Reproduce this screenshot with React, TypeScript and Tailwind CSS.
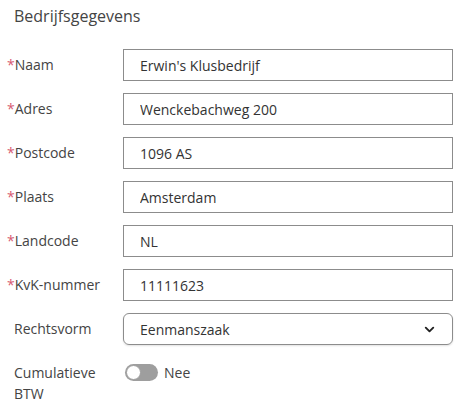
import { ChevronDown } from "lucide-react";

const fields = [
  { label: "Naam", value: "Erwin's Klusbedrijf" },
  { label: "Adres", value: "Wenckebachweg 200" },
  { label: "Postcode", value: "1096 AS" },
  { label: "Plaats", value: "Amsterdam" },
  { label: "Landcode", value: "NL" },
  { label: "KvK-nummer", value: "11111623" },
];

const App = () => {
  return (
    <div
      className="w-[461px] h-[410px] bg-white text-[#3a3a3a] pl-[7px] pr-[8px]"
      style={{ fontFamily: '"Open Sans", sans-serif' }}
    >
      <h1 className="pl-[7px] pt-[4px] h-[49px] text-[16px] leading-[24px] text-[#444]">
        Bedrijfsgegevens
      </h1>
      <div className="flex flex-col gap-[12px]">
        {fields.map((f) => (
          <div key={f.label} className="flex items-center h-[32px]">
            <label className="w-[116px] text-[14px] leading-[20px] text-[#444]">
              <span className="text-[#d65a72]">*</span>
              {f.label}
            </label>
            <input
              readOnly
              value={f.value}
              className="w-[330px] h-[32px] border border-[#8c8c8c] px-[16px] text-[14px] text-[#333] outline-none"
            />
          </div>
        ))}
        <div className="flex items-center h-[32px]">
          <label className="w-[116px] pl-[7px] text-[14px] leading-[20px] text-[#444]">
            Rechtsvorm
          </label>
          <div className="w-[330px] h-[32px] border border-[#8c8c8c] rounded-[6px] shadow-[0_1px_2px_rgba(0,0,0,0.12)] flex items-center justify-between pl-[16px] pr-[15px] text-[14px] text-[#333]">
            <span>Eenmanszaak</span>
            <ChevronDown size={15} strokeWidth={3} className="text-[#222]" />
          </div>
        </div>
        <div className="flex items-start pt-[5px]">
          <label className="w-[116px] pl-[7px] pr-[14px] text-[14px] leading-[21px] text-[#444]">
            Cumulatieve BTW
          </label>
          <div className="flex items-center gap-[6px] h-[17px] mt-[2px]">
            <div className="w-[33px] h-[17px] rounded-full bg-[#9e9e9e] relative ml-[2px]">
              <div className="absolute left-[1px] top-[1px] w-[15px] h-[15px] rounded-full bg-white border border-[#9e9e9e]" />
            </div>
            <span className="text-[14px] text-[#444]">Nee</span>
          </div>
        </div>
      </div>
    </div>
  );
};

export default App;
